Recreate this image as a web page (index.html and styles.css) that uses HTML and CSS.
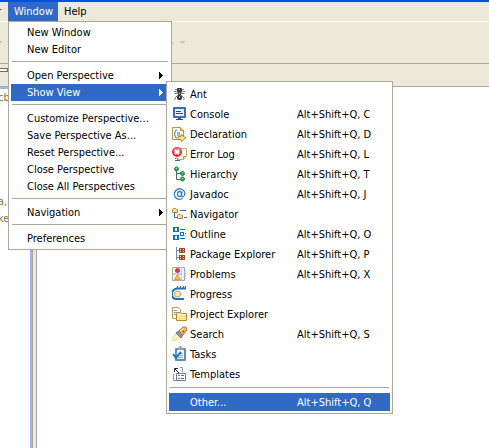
FILE: index.html
```html
<!DOCTYPE html>
<html lang="en">
<head>
<meta charset="utf-8">
<title>Window menu</title>
<link rel="stylesheet" href="styles.css">
</head>
<body>
<div class="app">
  <div class="titlebar"></div>
  <nav class="menubar">
    <button class="menu-title clipped" type="button">r</button>
    <div class="menu-anchor">
      <button class="menu-title open" type="button">Window</button>
      <div class="menu main-menu">
        <button class="item" type="button"><span class="label">New Window</span></button>
        <button class="item" type="button"><span class="label">New Editor</span></button>
        <hr>
        <button class="item" type="button"><span class="label">Open Perspective</span><svg class="arrow" viewBox="0 0 4 7" shape-rendering="crispEdges"><path d="M0 0h1v1h1v1h1v1h1v1h-1v1h-1v1h-1v1h-1z"/></svg></button>
        <div class="menu-anchor">
          <button class="item selected" type="button"><span class="label">Show View</span><svg class="arrow" viewBox="0 0 4 7" shape-rendering="crispEdges"><path d="M0 0h1v1h1v1h1v1h1v1h-1v1h-1v1h-1v1h-1z"/></svg></button>
          <div class="menu submenu">
            <button class="item view" type="button">
              <svg class="icon" viewBox="0 0 16 16"><path d="M3 3.500h2l2 2M12 3.500h-2l-2 2M2.500 7.500h10M3 14v-2l3-3M12 14v-2l-3-3M2 5.500h2l2 1M13 5.500h-2l-2 1" fill="none" stroke="#7d7d7d"/><rect x="5" y="2" width="5" height="4" rx="1" fill="#333"/><rect x="6" y="6" width="3" height="3" fill="#4a4a4a"/><rect x="5" y="9" width="5" height="5" rx="2" fill="#333"/><path d="M7 3h1v1H7zM7 7h1v1H7zM7 10h1v2H7z" fill="#bbb"/></svg>
              <span class="label">Ant</span></button>
            <button class="item view" type="button">
              <svg class="icon" viewBox="0 0 16 16"><rect x="1" y="1" width="13" height="11" rx="1" fill="#3d6cae"/><rect x="3" y="3" width="9" height="7" fill="#e6f0fb"/><path d="M4 5.500h5M4 7.500h7" stroke="#334c91"/><path d="M6 12h3v1h2v1H4v-1h2z" fill="#284d8b"/></svg>
              <span class="label">Console</span><kbd>Alt+Shift+Q, C</kbd></button>
            <button class="item view" type="button">
              <svg class="icon" viewBox="0 0 16 16"><path d="M.5 1.500h8l3 3v9H.5z" fill="#fffbed" stroke="#b6923f"/><path d="M8.500 1.500v3h3" fill="#f4d58a" stroke="#b6923f"/><path d="M5 4q-2 0-2 2t-1 2q1 0 1 2t2 2M5 7h3M5 9h3" fill="none" stroke="#2d72b3"/><path d="M6 10.500h3v-2l5 3.500-5 3.500v-2H6z" fill="#ffe49b" stroke="#b98622"/></svg>
              <span class="label">Declaration</span><kbd>Alt+Shift+Q, D</kbd></button>
            <button class="item view" type="button">
              <svg class="icon" viewBox="0 0 16 16"><path d="M5 2.500h9.500v8l-3 3H5z" fill="#fffef2" stroke="#c6ad71"/><path d="M11.500 13.500v-3h3" fill="#edd89b" stroke="#b99b52"/><circle cx="5" cy="6" r="5" fill="#df2f3c"/><circle cx="5" cy="5" r="3.500" fill="#ef7378"/><path d="M3 4l4 4M7 4L3 8" stroke="#fff" stroke-width="2"/><path d="M3 12.500h1M5 12.500h1M3 14.500h5" stroke="#356ba8"/></svg>
              <span class="label">Error Log</span><kbd>Alt+Shift+Q, L</kbd></button>
            <button class="item view" type="button">
              <svg class="icon" viewBox="0 0 16 16"><path d="M4.500 4v9.500H10M4.500 7.500H10" fill="none" stroke="#4c675a"/><g fill="#45a467" stroke="#25824c"><circle cx="4.500" cy="3" r="2"/><circle cx="10.500" cy="7.500" r="2"/><circle cx="10.500" cy="13" r="2"/></g><path d="M4 2h1v1H4zM10 6h1v1h-1zM10 12h1v1h-1z" fill="#8bd19c"/></svg>
              <span class="label">Hierarchy</span><kbd>Alt+Shift+Q, T</kbd></button>
            <button class="item view" type="button">
              <svg class="icon" viewBox="0 0 16 16"><path d="M10.500 12.500Q6 14.500 3.500 11.500T3.500 5 10 3.500 12.500 9 9.500 10L10 5.500" fill="none" stroke="#397db9" stroke-width="1.300"/><ellipse cx="7.500" cy="8" rx="2" ry="2.500" fill="none" stroke="#397db9" stroke-width="1.300"/></svg>
              <span class="label">Javadoc</span><kbd>Alt+Shift+Q, J</kbd></button>
            <button class="item view" type="button">
              <svg class="icon" viewBox="0 0 16 16"><path d="M2.500 7v4.500H6M8 4.500h6M12 11.500h3" fill="none" stroke="#2871ac"/><path d="M.5 3.500l1-1h2l1 1h1v3h-5zM5.500 9.500l1-1h2l1 1h1v3h-5z" fill="#ffe0a0" stroke="#bc812d"/></svg>
              <span class="label">Navigator</span></button>
            <button class="item view" type="button">
              <svg class="icon" viewBox="0 0 16 16" shape-rendering="crispEdges"><path d="M1 1h6v5H1zM1 9h6v5H1zM8 6h4v4H8z" fill="#0872b5"/><path d="M3 2h2v3H3zM3 10h2v3H3zM9 7h2v2H9z" fill="#effaff"/><path d="M8 3h5v1H8zM8 12h5v1H8zM13 7h1v1h-1z" fill="#0872b5"/></svg>
              <span class="label">Outline</span><kbd>Alt+Shift+Q, O</kbd></button>
            <button class="item view" type="button">
              <svg class="icon" viewBox="0 0 16 16"><path d="M4.500 1v13M4.500 4.500H7M4.500 11.500H7" fill="none" stroke="#788ba1"/><path d="M7 2h6v5H7zM7 9h6v5H7z" fill="#9a4c26"/><path d="M8 3h1v1H8zM11 3h1v1h-1zM8 5h1v1H8zM11 5h1v1h-1zM8 10h1v1H8zM11 10h1v1h-1zM8 12h1v1H8zM11 12h1v1h-1z" fill="#ffdda0"/></svg>
              <span class="label">Package Explorer</span><kbd>Alt+Shift+Q, P</kbd></button>
            <button class="item view" type="button">
              <svg class="icon" viewBox="0 0 16 16"><path d="M.5 1.500h9v13h-9z" fill="#fffaf0" stroke="#b9aa87"/><path d="M9.500 1.500h3v13h-3M.5 8h9" fill="#e9f3fc" stroke="#8fa8ca"/><path d="M13 4v9" stroke="#a0b6d5"/><circle cx="5.500" cy="4.500" r="2.500" fill="#da354b"/><path d="M5.500 8.500l3 5h-6z" fill="#ffc457" stroke="#e29131"/></svg>
              <span class="label">Problems</span><kbd>Alt+Shift+Q, X</kbd></button>
            <button class="item view" type="button">
              <svg class="icon" viewBox="0 0 16 16"><path d="M14 2.500H5Q0 3.500 0 8t4 5h8" fill="none" stroke="#2173b4" stroke-width="2"/><path d="M5.500 0v2M8.500 0v2M11.500 0v2M13.500 0v2" stroke="#2173b4"/><circle cx="5.500" cy="8" r="3" fill="#fff0b5" stroke="#bd963b"/></svg>
              <span class="label">Progress</span></button>
            <button class="item view" type="button">
              <svg class="icon" viewBox="0 0 16 16"><path d="M.5 1.500h6l2 2v9h-8z" fill="#fffceb" stroke="#b79a53"/><path d="M2 4.500h3M2 6.500h4M2 8.500h2" stroke="#6d9dce"/><path d="M4.500 14.500v-7l1-1h3l1 1h5v7z" fill="#ffe596" stroke="#ba832d"/><path d="M5 8.500h9" stroke="#fff7cf"/></svg>
              <span class="label">Project Explorer</span></button>
            <button class="item view" type="button">
              <svg class="icon" viewBox="0 0 16 16"><path d="M0 13l4-6 4 4-6 4z" fill="#fff2b8" stroke="#efd891"/><path d="M4 7l3-2 4 4-2 3z" fill="#9691a5" stroke="#75718a"/><path d="M7 5l4-4 3 0 1 3-4 5z" fill="#f2ba62" stroke="#b88137"/><path d="M9 5l3-3" stroke="#ffe7a7"/><path d="M11 5l1 1" stroke="#5d4e86" stroke-width="2"/></svg>
              <span class="label">Search</span><kbd>Alt+Shift+Q, S</kbd></button>
            <button class="item view" type="button">
              <svg class="icon" viewBox="0 0 16 16"><rect x="3" y="2" width="11" height="13" rx="1" fill="#6489bc"/><rect x="5" y="4" width="7" height="9" fill="#f5f9ff"/><path d="M6 3V2l2-2h1l2 2v2H6z" fill="#9ca6b5"/><path d="M8 7.500h3M8 9.500h3M6 11.500h5" stroke="#91a8c8"/><path d="M1 8l3 4 5-6" fill="none" stroke="#1478bd" stroke-width="2"/></svg>
              <span class="label">Tasks</span></button>
            <button class="item view" type="button">
              <svg class="icon" viewBox="0 0 16 16"><path d="M1.500 8v6.500H5M8 1.500h2.500V6" fill="none" stroke="#8994a6"/><path d="M2 2h4v1H4v1h1v1h1v1h1v1H6V6H5V5H4V4H3v2H2z" fill="#252c38"/><path d="M4.500 7.500h9v7h-9z" fill="#fff" stroke="#687b9c"/><path d="M6 9.500h2M6 12.500h2" stroke="#d04d50"/><path d="M9 9.500h3" stroke="#438b63"/><path d="M9 12.500h3" stroke="#486eb5"/></svg>
              <span class="label">Templates</span></button>
            <hr>
            <button class="item other selected" type="button"><span class="label">Other...</span><kbd>Alt+Shift+Q, Q</kbd></button>
          </div>
        </div>
        <hr>
        <button class="item" type="button"><span class="label">Customize Perspective...</span></button>
        <button class="item" type="button"><span class="label">Save Perspective As...</span></button>
        <button class="item" type="button"><span class="label">Reset Perspective...</span></button>
        <button class="item" type="button"><span class="label">Close Perspective</span></button>
        <button class="item" type="button"><span class="label">Close All Perspectives</span></button>
        <hr>
        <button class="item" type="button"><span class="label">Navigation</span><svg class="arrow" viewBox="0 0 4 7" shape-rendering="crispEdges"><path d="M0 0h1v1h1v1h1v1h1v1h-1v1h-1v1h-1v1h-1z"/></svg></button>
        <hr>
        <button class="item" type="button"><span class="label">Preferences</span></button>
      </div>
    </div>
    <button class="menu-title" type="button">Help</button>
  </nav>
  <div class="toolbar">
    <svg class="drop-edge" viewBox="0 0 2 3"><path d="M0 0h2v1H1v1H0z"/></svg>
    <svg class="drops" viewBox="0 0 14 3"><path d="M0 1h2v2H0zM9 0h5v1h-1v1h-1v1h-1V2h-1V1H9z"/></svg>
  </div>
  <div class="tabstrip"><span class="tab"></span></div>
  <main class="workspace">
    <section class="editor"><code>cb</code><code class="later">a,</code><code>ke</code></section>
    <div class="sash"></div>
    <section class="pane"></section>
  </main>
</div>
</body>
</html>
```
FILE: styles.css
```css
* { box-sizing: border-box; }
body {
  margin: 0;
  background: #fff;
  font: 11px/16px "DejaVu Sans Condensed", "DejaVu Sans", sans-serif;
  color: #000;
}
button {
  border: 0;
  margin: 0;
  padding: 0;
  background: none;
  color: inherit;
  font: inherit;
  text-align: left;
}
.app { display: flex; flex-direction: column; min-height: 100vh; overflow: hidden; }
.titlebar { height: 2px; background: #0550df; }
.menubar {
  display: flex;
  height: 20px;
  background: #ece9d8;
  border-bottom: 1px solid #fff;
}
.menu-title { height: 19px; padding: 0 6px; }
.menu-title.clipped { width: 8px; padding: 0; text-indent: -3px; }
.menu-title.open { width: 50px; background: #316ac5; color: #fff; }
.menu-anchor { position: relative; }
.menu {
  position: absolute;
  padding: 2px;
  background: #fff;
  border: 1px solid #aca899;
}
.main-menu { top: 19px; left: 0; width: 164px; z-index: 1; }
.submenu { top: -3px; left: 155px; width: 227px; z-index: 2; color: #000; }
.item {
  display: flex;
  align-items: center;
  width: 100%;
  height: 17px;
  padding: 0 6px 0 16px;
  white-space: nowrap;
}
.item .label { flex: 1; }
.item.view { height: 20px; padding: 0 0 0 3px; }
.submenu .label, .submenu kbd { padding-top: 2px; }
.item.other { height: 18px; padding: 0 0 0 21px; }
.item.selected { background: #316ac5; color: #fff; }
.icon { width: 16px; height: 16px; margin-right: 2px; }
.arrow { width: 4px; height: 7px; fill: currentColor; }
kbd { width: 93px; font: inherit; }
hr { height: 1px; margin: 3px 1px 5px; border: 0; background: #aca899; }
.toolbar {
  display: flex;
  height: 42px;
  padding-top: 19px;
  background: #ece9d8;
  border-bottom: 1px solid #aca899;
}
.drop-edge { width: 2px; height: 3px; margin-right: 169px; fill: #c9c6b8; }
.drops { width: 14px; height: 3px; fill: #c9c6b8; }
.tabstrip {
  height: 23px;
  padding-top: 4px;
  background: #ece9d8;
  border-bottom: 1px solid #aca899;
}
.tab { display: block; width: 8px; height: 4px; border: 1px solid #716f64; border-left: 0; background: #fff; }
.workspace { display: flex; flex: 1; }
.editor {
  width: 32px;
  border-top: 2px solid #99b5f5;
  border-right: 2px solid #99b5f5;
  color: #8b7344;
}
.editor code { display: block; font: inherit; line-height: 17px; text-indent: -2px; }
.editor .later { margin-top: 87px; }
.sash { width: 5px; background: #ece9d8; border: solid #aca899; border-width: 0 1px; }
.pane { flex: 1; }
```
